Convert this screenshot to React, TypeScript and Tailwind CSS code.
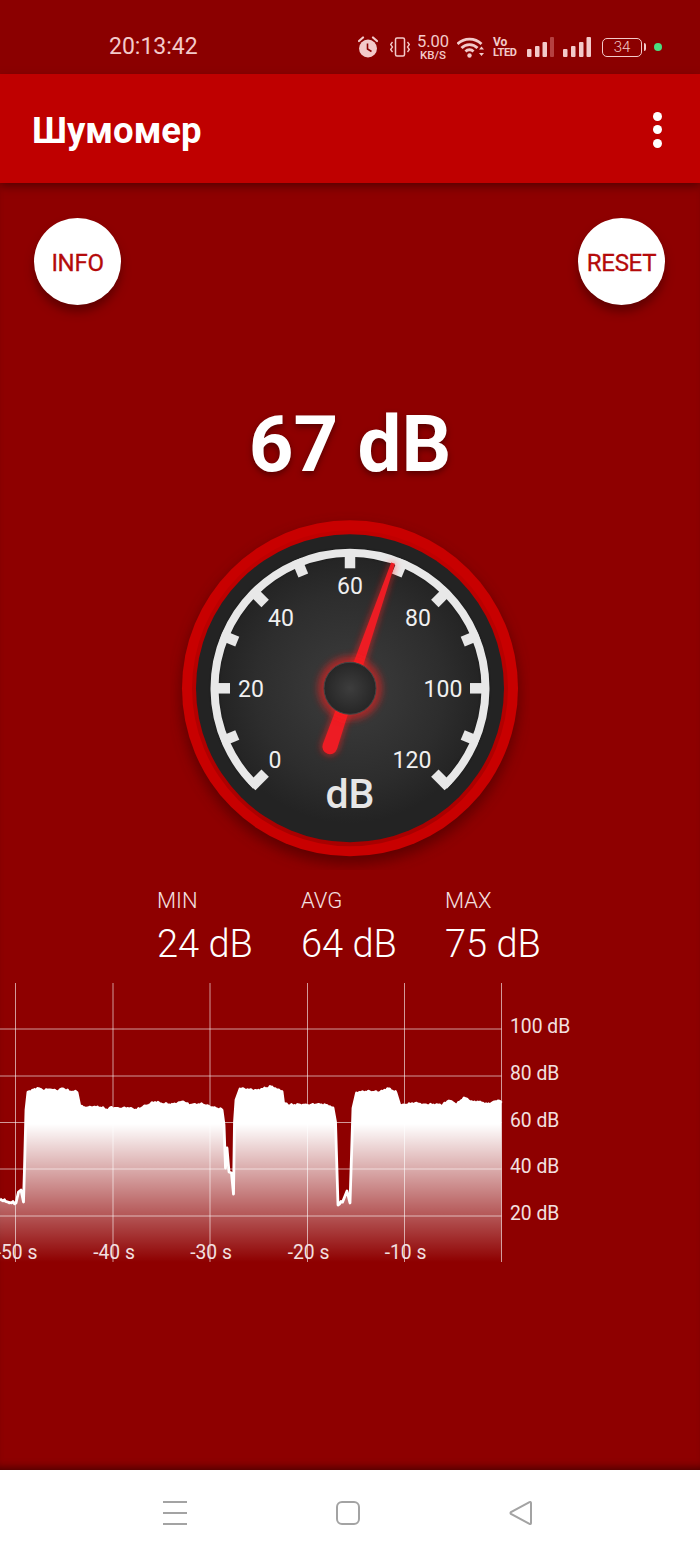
const chartRaw: number[][] = [
  [0, 1199], [5, 1201], [10, 1202.5], [16, 1203], [18.5, 1192], [21, 1190], [23.5, 1202], [24.5, 1168], [26, 1110],
  [28, 1092], [33, 1091], [38, 1088.5], [43, 1091], [50, 1090], [57, 1091.5], [63, 1089], [68, 1091.5], [77, 1092.5],
  [80, 1107], [87, 1108], [93, 1107.5], [100, 1108], [108, 1110.5], [110, 1108], [120, 1109], [128, 1108.5], [137, 1110.5],
  [143, 1107.5], [155, 1102.5], [163, 1104.5], [173, 1105], [183, 1102], [188, 1105], [203, 1105], [213, 1108], [222, 1110],
  [224, 1125], [225.5, 1168], [227, 1148], [229, 1172], [231.5, 1173], [233.5, 1194], [234.5, 1122], [236, 1100], [240, 1089],
  [248, 1090], [257, 1091], [267, 1088.5], [272, 1087], [277, 1090], [282, 1091.5], [283.5, 1103], [290, 1106], [300, 1105],
  [307, 1105.5], [317, 1105], [327, 1105.5], [333, 1108], [335.5, 1122], [338, 1205], [343, 1201], [347, 1191], [350, 1203],
  [353, 1108], [356.5, 1093], [370, 1092], [380, 1093], [388, 1089], [396, 1093], [400, 1106], [417, 1103.5], [423, 1105],
  [443, 1105.5], [449, 1101], [457, 1105], [464, 1098], [473, 1103], [480, 1102], [487, 1105], [498, 1101], [501.5, 1103],
]

// plateaus in the reference are noisy, the hand-read points are too smooth
function withNoise(points: number[][]) {
  const out: number[][] = []
  points.forEach((p, i) => {
    const next = points[i + 1]
    out.push(p)
    if (!next) return
    const dx = next[0] - p[0]
    if (dx < 3 || Math.abs(next[1] - p[1]) > 8) return
    for (let x = p[0] + 1.5; x < next[0]; x += 1.5) {
      const y = p[1] + ((next[1] - p[1]) * (x - p[0])) / dx
      out.push([x, y + Math.sin(x * 2.3) * 0.7 + Math.sin(x * 0.9) * 0.6])
    }
  })
  return out
}

const xTicks = [
  { x: 15.5, label: '-50 s' },
  { x: 113, label: '-40 s' },
  { x: 210, label: '-30 s' },
  { x: 307.5, label: '-20 s' },
  { x: 404.5, label: '-10 s' },
]
const yTicks = [
  { y: 1029, label: '100 dB' },
  { y: 1076, label: '80 dB' },
  { y: 1122.5, label: '60 dB' },
  { y: 1169, label: '40 dB' },
  { y: 1216, label: '20 dB' },
]

const scale = [
  { label: '0', x: 105, y: 258 },
  { label: '20', x: 81, y: 187 },
  { label: '40', x: 111, y: 116 },
  { label: '60', x: 180, y: 84 },
  { label: '80', x: 248, y: 116 },
  { label: '100', x: 273, y: 187 },
  { label: '120', x: 242, y: 258 },
]

function polar(r: number, deg: number, cx = 180, cy = 178.3) {
  const a = (deg * Math.PI) / 180
  return [cx + r * Math.sin(a), cy - r * Math.cos(a)]
}

function Gauge() {
  const [sx, sy] = polar(135.5, -136)
  const [ex, ey] = polar(135.5, 136)
  const ticks = Array.from({ length: 13 }, (_, i) => -135 + i * 22.5)
  const arc = `M ${sx} ${sy} A 135.5 135.5 0 1 1 ${ex} ${ey}`
  return (
    <svg width="360" height="360" viewBox="0 0 360 360" className="block">
      <defs>
        <radialGradient id="face" cx="50%" cy="50%" r="50%">
          <stop offset="0%" stopColor="#3d3d3d" />
          <stop offset="70%" stopColor="#2d2d2d" />
          <stop offset="100%" stopColor="#232323" />
        </radialGradient>
        <radialGradient id="hub" cx="50%" cy="50%" r="50%">
          <stop offset="0%" stopColor="#3d3d3d" />
          <stop offset="100%" stopColor="#262626" />
        </radialGradient>
        <linearGradient id="band" x1="0" y1="0" x2="0" y2="1">
          <stop offset="0%" stopColor="#c00000" />
          <stop offset="100%" stopColor="#a80000" />
        </linearGradient>
        <filter id="soft" x="-20%" y="-20%" width="140%" height="140%">
          <feGaussianBlur stdDeviation="7" />
        </filter>
        <filter id="glow" x="-100%" y="-20%" width="300%" height="140%">
          <feGaussianBlur stdDeviation="3.5" />
        </filter>
        <filter id="tiny" x="-10%" y="-10%" width="120%" height="120%">
          <feGaussianBlur stdDeviation="1.5" />
        </filter>
      </defs>
      <circle cx="180" cy="185" r="169" fill="#4a0000" opacity="0.7" filter="url(#soft)" />
      <circle cx="180" cy="178.3" r="168" fill="#c80000" />
      <circle cx="180" cy="178.3" r="158" fill="url(#band)" />
      <circle cx="180" cy="178.3" r="154" fill="#232323" />
      <circle cx="180" cy="178.3" r="135" fill="url(#face)" />
      <path d={arc} stroke="#000000" strokeOpacity="0.35" strokeWidth="8" fill="none" filter="url(#tiny)" />
      <path d={arc} stroke="#e8e8e8" strokeWidth="8" fill="none" />
      {ticks.map((deg) => {
        const [x1, y1] = polar(139, deg)
        const [x2, y2] = polar(deg % 45 === 0 ? 120 : 122, deg)
        return <line key={deg} x1={x1} y1={y1} x2={x2} y2={y2} stroke="#e8e8e8" strokeWidth="10.5" />
      })}
      {scale.map((s) => (
        <text key={s.label} x={s.x} y={s.y} textAnchor="middle" fontFamily="Roboto, sans-serif" fontSize="23" fill="#f0f0f0">
          {s.label}
        </text>
      ))}
      <text x="180" y="298" textAnchor="middle" fontFamily="Roboto, sans-serif" fontWeight="500" fontSize="41" fill="#e6e6e6">
        dB
      </text>
      <g transform="rotate(19 180 178.3)">
        <path d="M 171.5 240 L 177.5 46 L 182.5 46 L 188.5 240 A 8.5 8.5 0 0 1 171.5 240 Z" fill="#ff1a1a" opacity="0.65" filter="url(#glow)" />
        <path d="M 172.5 240 L 178 46 L 182 46 L 187.5 240 A 7.5 7.5 0 0 1 172.5 240 Z" fill="#ed1c24" />
      </g>
      <circle cx="180" cy="178.3" r="32" fill="#ff1a1a" opacity="0.55" filter="url(#glow)" />
      <circle cx="180" cy="178.3" r="26" fill="url(#hub)" stroke="#444444" strokeWidth="1" />
    </svg>
  )
}

function Chart() {
  const points = withNoise(chartRaw).map((p) => `${p[0].toFixed(1)},${p[1].toFixed(1)}`)
  const area = `M 0 1262 L ${points.join(' L ')} L 501.5 1262 Z`
  return (
    <svg width="700" height="280" viewBox="0 983 700 280" className="block">
      <defs>
        <linearGradient id="fill" gradientUnits="userSpaceOnUse" x1="0" y1="1124" x2="0" y2="1262">
          <stop offset="0%" stopColor="#ffffff" />
          <stop offset="100%" stopColor="#ffffff" stopOpacity="0" />
        </linearGradient>
      </defs>
      <path d={area} fill="url(#fill)" />
      <polyline points={points.join(' ')} fill="none" stroke="#ffffff" strokeWidth="2.8" strokeLinejoin="round" />
      {xTicks.map((t) => (
        <line key={t.x} x1={t.x} x2={t.x} y1="983" y2="1262" stroke="#ffffff" strokeOpacity="0.6" strokeWidth="1" />
      ))}
      <line x1="501.5" x2="501.5" y1="983" y2="1262" stroke="#ffffff" strokeOpacity="0.6" strokeWidth="1" />
      {yTicks.map((t) => (
        <line key={t.y} x1="0" x2="501.5" y1={t.y} y2={t.y} stroke="#ffffff" strokeOpacity="0.6" strokeWidth="1" />
      ))}
      {xTicks.map((t) => (
        <text key={t.label} x={t.x + 1} y="1259" textAnchor="middle" fontFamily="Roboto, sans-serif" fontSize="19.3" fill="#f3e0e0">
          {t.label}
        </text>
      ))}
      {yTicks.map((t) => (
        <text key={t.label} x="510" y={t.y + 4} fontFamily="Roboto, sans-serif" fontSize="19.3" fill="#f3e0e0">
          {t.label}
        </text>
      ))}
    </svg>
  )
}

function StatusIcons() {
  const tint = '#f3caca'
  return (
    <div className="ml-auto flex items-center pr-[38px]">
      {/* alarm */}
      <svg width="20" height="22" viewBox="0 0 20 22" className="mr-[12px]">
        <circle cx="10" cy="12.5" r="9" fill={tint} />
        <path d="M1 5 L5 1.5 M19 5 L15 1.5" stroke={tint} strokeWidth="2.2" strokeLinecap="round" />
        <path d="M9.5 7.5 V13 L13.5 15.5" stroke="#8b0000" strokeWidth="1.6" fill="none" />
      </svg>
      {/* vibrate */}
      <svg width="20" height="20" viewBox="0 0 20 20" className="mr-[7px]">
        <rect x="5.5" y="1" width="9" height="18" rx="1.5" fill="none" stroke={tint} strokeWidth="1.5" />
        <path d="M2.5 5 L0.7 7.5 L2.5 10 L0.7 12.5 L2.5 15 M17.5 5 L19.3 7.5 L17.5 10 L19.3 12.5 L17.5 15" fill="none" stroke={tint} strokeWidth="1.3" />
      </svg>
      <div className="mr-[8px] flex w-[32px] flex-col items-center text-[#f3caca]">
        <span className="text-[16.5px] leading-[15px]">5.00</span>
        <span className="text-[11.5px] font-medium leading-[12px]">KB/S</span>
      </div>
      {/* wifi */}
      <svg width="27" height="22" viewBox="0 0 27 22" className="mr-[9px]">
        <path d="M0.5 8 A 17 17 0 0 1 24.5 8 M4.5 12 A 11 11 0 0 1 20.5 12 M8.5 15.5 A 5.5 5.5 0 0 1 16.5 15.5" fill="none" stroke={tint} strokeWidth="2.8" />
        <circle cx="12.5" cy="19.5" r="2.2" fill={tint} />
        <path d="M24.5 10.5 L27 13.5 H22 Z M24.5 20 L27 17 H22 Z" fill={tint} />
      </svg>
      <div className="mr-[11px] flex w-[23px] flex-col items-start font-bold text-[#f3caca]">
        <span className="text-[12px] leading-[10px]">Vo</span>
        <span className="text-[11px] leading-[11px] tracking-[-0.3px]">LTED</span>
      </div>
      {/* sim 1 */}
      <svg width="27" height="20" viewBox="0 0 27 20" className="mr-[9px]">
        <rect x="0" y="12" width="4.5" height="8" rx="1" fill={tint} />
        <rect x="8" y="9" width="4.5" height="11" rx="1" fill={tint} />
        <rect x="15.5" y="5" width="4.5" height="15" rx="1" fill={tint} />
        <rect x="23" y="0" width="4" height="20" rx="1" fill="#b54040" />
      </svg>
      {/* sim 2 */}
      <svg width="28" height="20" viewBox="0 0 28 20" className="mr-[11px]">
        <rect x="0" y="12" width="4.5" height="8" rx="1" fill={tint} />
        <rect x="8" y="9" width="4.5" height="11" rx="1" fill={tint} />
        <rect x="16" y="5" width="4.5" height="15" rx="1" fill={tint} />
        <rect x="23.5" y="0" width="4.5" height="20" rx="1" fill={tint} />
      </svg>
      {/* battery */}
      <div className="relative mr-[12px] flex h-[19px] w-[40px] items-center justify-center rounded-[5px] border-[1.5px] border-[#f3caca] text-[15px] font-light text-[#f3caca]">
        <div className="absolute -right-[5px] top-[4px] h-[8px] w-[2px] rounded-r-sm bg-[#f3caca]" />
        34
      </div>
      <div className="h-[8px] w-[8px] rounded-full bg-[#4ade80]" />
    </div>
  )
}

function RoundButton({ label }: { label: string }) {
  return (
    <button className="flex h-[87px] w-[87px] items-center justify-center rounded-full bg-white pt-[2px] text-[24px] font-normal tracking-[-0.3px] text-[#b40a0a] [-webkit-text-stroke:0.3px_#b40a0a] shadow-[0_7px_10px_rgba(60,0,0,0.55)]">
      {label}
    </button>
  )
}

function Stat({ label, value }: { label: string; value: string }) {
  return (
    <div className="flex w-[96px] flex-col items-start font-light text-white">
      <span className="text-[22px] leading-[26px] text-[#f5e0e0]">{label}</span>
      <span className="mt-[8px] whitespace-nowrap text-[38px] leading-[44px]">{value}</span>
    </div>
  )
}

export default function App() {
  return (
    <div className="flex h-[1556px] w-[700px] flex-col overflow-hidden bg-[#8e0000] font-['Roboto',sans-serif]">
      <div className="flex h-[74px] items-center bg-[#8b0000] pl-[109px] pt-[20px]">
        <span className="text-[23px] text-[#f3caca]">20:13:42</span>
        <StatusIcons />
      </div>
      <header className="relative z-10 flex h-[109px] items-center justify-between bg-[#bf0000] pl-[32px] pr-[38px] shadow-[0_4px_8px_rgba(50,0,0,0.55)]">
        <h1 className="pt-[5px] text-[36.5px] font-bold text-white">Шумомер</h1>
        <div className="flex flex-col gap-[4.5px] pt-[2px]">
          <span className="h-[9px] w-[9px] rounded-full bg-white" />
          <span className="h-[9px] w-[9px] rounded-full bg-white" />
          <span className="h-[9px] w-[9px] rounded-full bg-white" />
        </div>
      </header>
      <main className="flex flex-1 flex-col bg-[#8e0000] shadow-[inset_0_-8px_8px_-6px_rgba(40,0,0,0.7)]">
        <div className="flex justify-between pl-[34px] pr-[35px] pt-[35px]">
          <RoundButton label="INFO" />
          <RoundButton label="RESET" />
        </div>
        <div className="mt-[90px] text-center text-[78px] font-bold leading-[100px] text-white [text-shadow:0_3px_6px_rgba(50,0,0,0.6)]">
          67 dB
        </div>
        <div className="mt-[15px] flex justify-center">
          <Gauge />
        </div>
        <div className="mt-[18px] flex justify-center gap-[48px] pr-[2px]">
          <Stat label="MIN" value="24 dB" />
          <Stat label="AVG" value="64 dB" />
          <Stat label="MAX" value="75 dB" />
        </div>
        <div className="mt-[17px]">
          <Chart />
        </div>
      </main>
      <nav className="flex h-[86px] items-center gap-[149px] bg-white pl-[163px]">
        <svg width="24" height="24" viewBox="0 0 24 24">
          <path d="M0 1 H24 M0 12 H24 M0 23 H24" stroke="#a3a3a3" strokeWidth="2" />
        </svg>
        <svg width="24" height="24" viewBox="0 0 24 24">
          <rect x="1" y="1" width="22" height="22" rx="5" fill="none" stroke="#a3a3a3" strokeWidth="2" />
        </svg>
        <svg width="24" height="24" viewBox="0 0 24 24">
          <path d="M22 2 V22 Q22 23.5 20.5 22.8 L2 13 Q1 12 2 11 L20.5 1.2 Q22 0.5 22 2 Z" fill="none" stroke="#a3a3a3" strokeWidth="2" />
        </svg>
      </nav>
    </div>
  )
}
